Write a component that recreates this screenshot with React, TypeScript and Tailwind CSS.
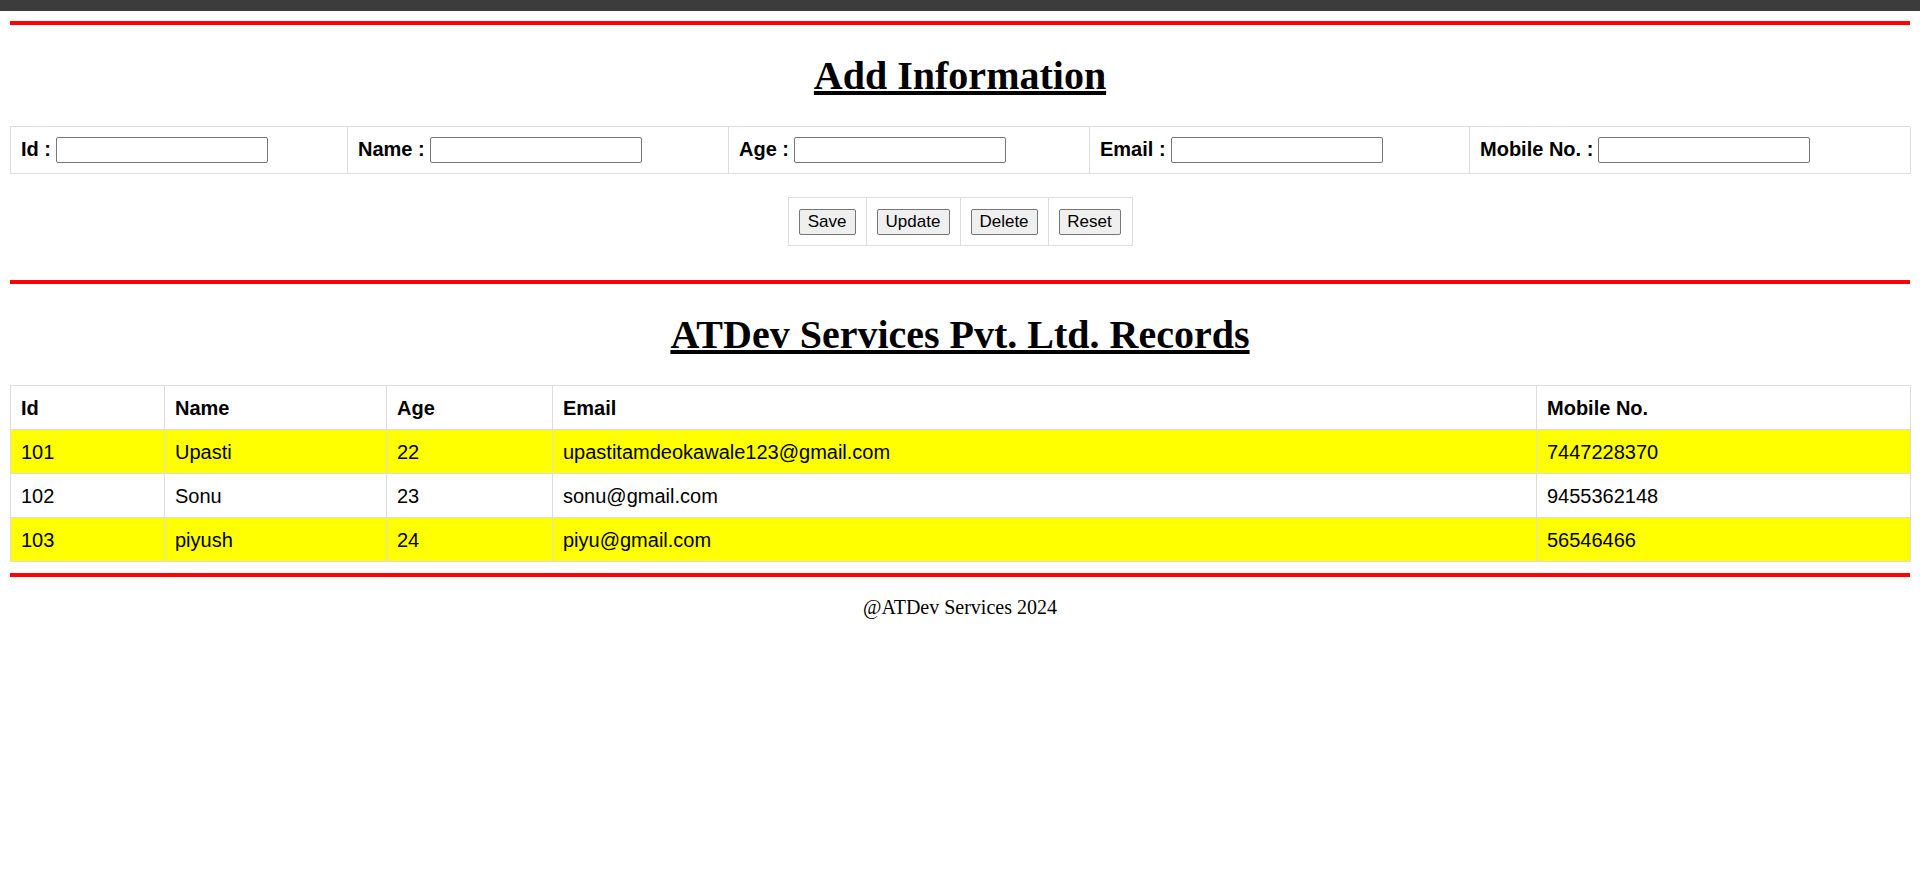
import React from "react";

const sans = "font-['Liberation_Sans',Arial,sans-serif]";
const serif = "font-['Liberation_Serif','Times_New_Roman',serif]";

const formFields = [
  { label: "Id :", w: "w-[337px]" },
  { label: "Name :", w: "w-[381px]" },
  { label: "Age :", w: "w-[361px]" },
  { label: "Email :", w: "w-[380px]" },
  { label: "Mobile No. :", w: "w-[441px]" },
];

const buttons = [
  { label: "Save", cell: "w-[78px]", btn: "w-[57px]" },
  { label: "Update", cell: "w-[94px]", btn: "w-[73px]" },
  { label: "Delete", cell: "w-[88px]", btn: "w-[67px]" },
  { label: "Reset", cell: "w-[84px]", btn: "w-[62px]" },
];

const colW = ["w-[154px]", "w-[222px]", "w-[166px]", "w-[984px]", "w-[374px]"];
const headers = ["Id", "Name", "Age", "Email", "Mobile No."];
const rows = [
  ["101", "Upasti", "22", "upastitamdeokawale123@gmail.com", "7447228370"],
  ["102", "Sonu", "23", "sonu@gmail.com", "9455362148"],
  ["103", "piyush", "24", "piyu@gmail.com", "56546466"],
];

function RedLine() {
  return <div className="h-[4px] bg-[#ff0000]" />;
}

export default function App() {
  return (
    <div className={`min-h-[875px] w-[1920px] bg-white text-black ${serif}`}>
      <div className="h-[11px] bg-[#3c3c3c]" />
      <div className="px-[10px] pt-[10px]">
        <RedLine />
        <h1 className={`mt-[28px] mb-[27px] h-[46px] text-center text-[40px] leading-[46px] font-bold underline ${serif}`}>
          Add Information
        </h1>

        {/* Form row */}
        <div className={`flex border-l border-t border-[#dddddd] ${sans} text-[20px]`}>
          {formFields.map((f) => (
            <div
              key={f.label}
              className={`${f.w} h-[47px] shrink-0 border-r border-b border-[#dddddd] flex items-center gap-[5px] pl-[10px]`}
            >
              <span className="font-bold whitespace-nowrap leading-[23px] -translate-y-[1px]">{f.label}</span>
              <input
                type="text"
                className="w-[212px] h-[26px] border border-[#767676] rounded-[2px] bg-white px-[2px] text-[13px] outline-none"
              />
            </div>
          ))}
        </div>

        {/* Buttons */}
        <div className="mt-[23px] flex justify-center">
          <div className={`flex border-l border-t border-[#dddddd] ${sans}`}>
            {buttons.map((b) => (
              <div
                key={b.label}
                className={`${b.cell} h-[48px] shrink-0 border-r border-b border-[#dddddd] flex items-center pl-[10px]`}
              >
                <button
                  className={`${b.btn} h-[26px] border border-[#767676] rounded-[2px] bg-[#efefef] text-[17px] leading-[20px] text-black text-center`}
                >
                  {b.label}
                </button>
              </div>
            ))}
          </div>
        </div>

        <div className="mt-[34px]">
          <RedLine />
        </div>
        <h1 className={`mt-[28px] mb-[27px] h-[46px] text-center text-[40px] leading-[46px] font-bold underline ${serif}`}>
          ATDev Services Pvt. Ltd. Records
        </h1>

        {/* Records table */}
        <div className={`border-l border-t border-[#dddddd] w-[1901px] ${sans} text-[20px]`}>
          <div className="flex">
            {headers.map((h, i) => (
              <div
                key={h}
                className={`${colW[i]} h-[44px] shrink-0 border-r border-b border-[#dddddd] flex items-center pl-[10px] font-bold`}
              >
                {h}
              </div>
            ))}
          </div>
          {rows.map((r, ri) => (
            <div key={r[0]} className={`flex ${ri % 2 === 0 ? "bg-[#ffff00]" : "bg-white"}`}>
              {r.map((c, i) => (
                <div
                  key={i}
                  className={`${colW[i]} h-[44px] shrink-0 border-r border-b border-[#dddddd] flex items-center pl-[10px]`}
                >
                  {c}
                </div>
              ))}
            </div>
          ))}
        </div>

        <div className="mt-[11px]">
          <RedLine />
        </div>
        <p className={`mt-[19px] text-center text-[20px] leading-[23px] ${serif}`}>@ATDev Services 2024</p>
      </div>
    </div>
  );
}
